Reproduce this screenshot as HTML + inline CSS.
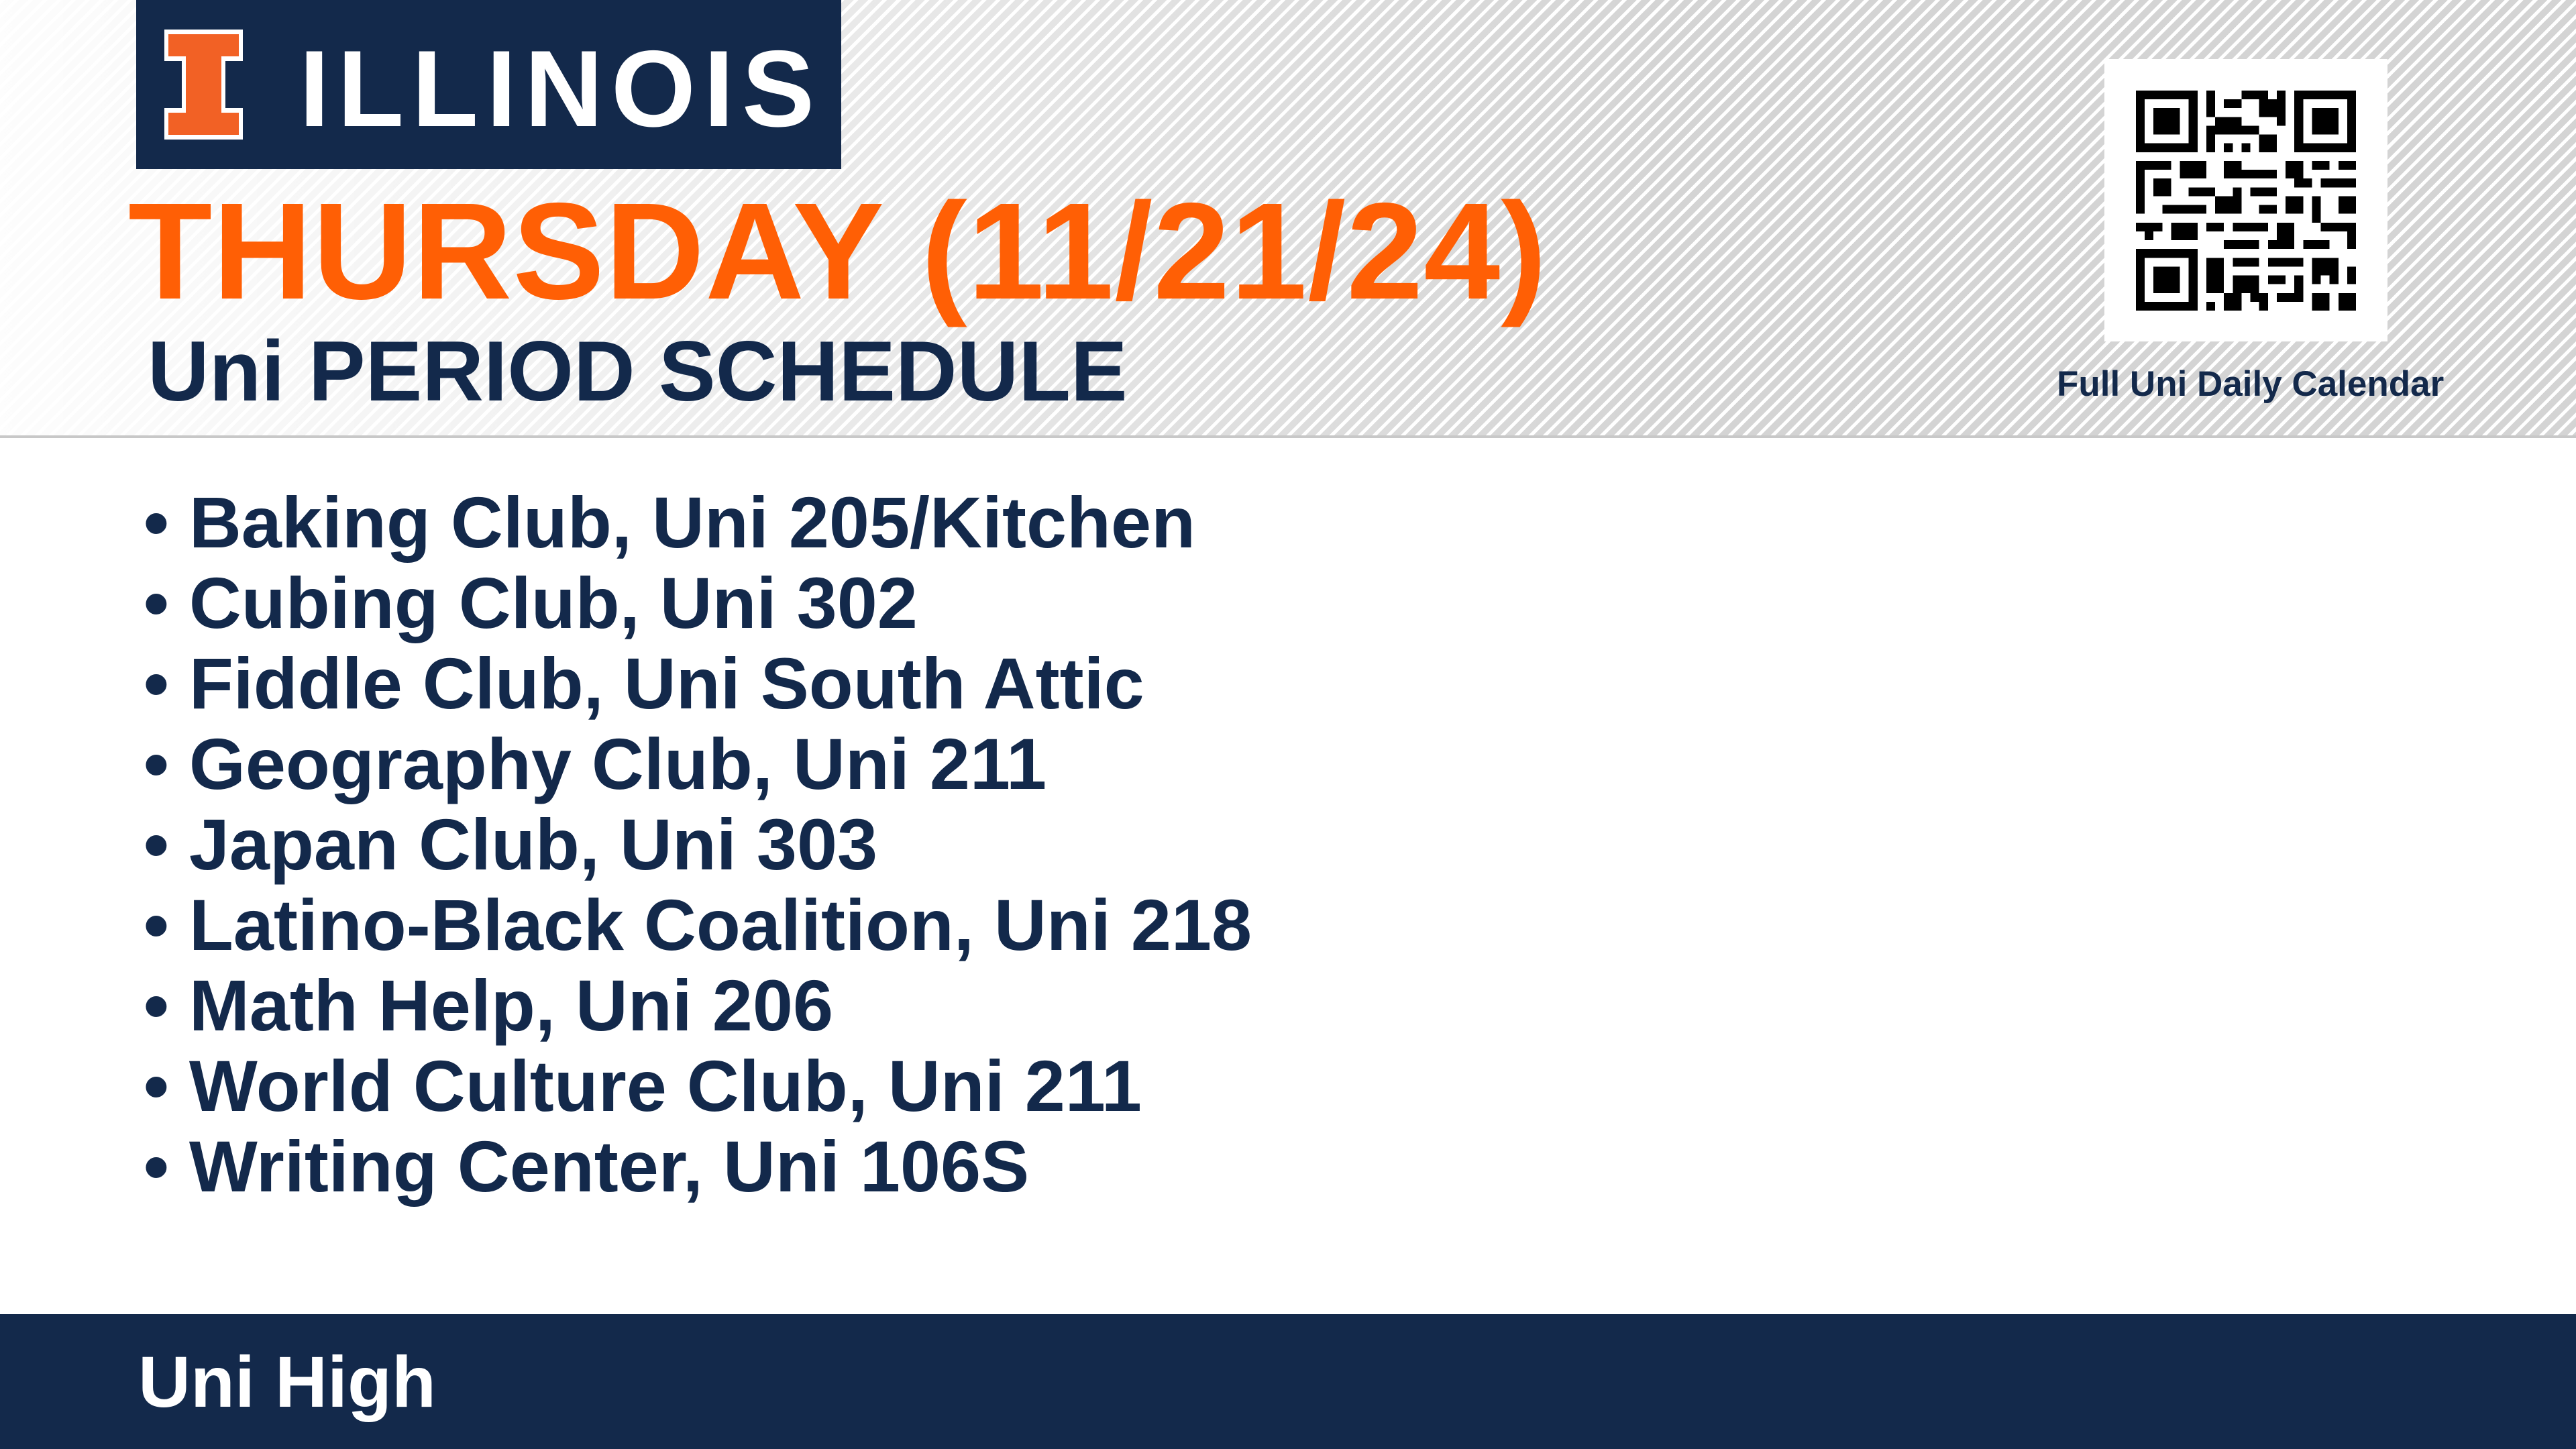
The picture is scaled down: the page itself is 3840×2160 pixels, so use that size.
<!DOCTYPE html>
<html><head><meta charset="utf-8"><style>
*{margin:0;padding:0;box-sizing:border-box}
body{width:3840px;height:2160px;position:relative;overflow:hidden;background:#fff;font-family:"Liberation Sans",sans-serif;font-weight:bold}
.hdr{position:absolute;left:0;top:0;width:3840px;height:651px;background:repeating-linear-gradient(135deg,#fff 0 5px,#d4d4d4 5px 15px)}
.fade{position:absolute;left:0;top:0;width:3840px;height:651px;background:linear-gradient(90deg,rgba(255,255,255,.95) 0%,rgba(255,255,255,.7) 20%,rgba(255,255,255,.3) 45%,rgba(255,255,255,0) 65%)}
.rule{position:absolute;left:0;top:649px;width:3840px;height:4px;background:#c8c8c8}
.t{position:absolute;white-space:nowrap;line-height:1}
.logo{position:absolute;left:203px;top:0;width:1051px;height:252px;background:#13294b}
.foot{position:absolute;left:0;top:1959px;width:3840px;height:201px;background:#13294b}
</style></head><body>
<div class="hdr"></div><div class="fade"></div><div class="rule"></div>
<div class="logo">
<svg style="position:absolute;left:42px;top:44px" width="117" height="164" viewBox="0 0 117 164">
<path d="M0 0H117V47H91V117H117V164H0V117H26V47H0Z" fill="#fff"/>
<path d="M6 7H111V40H85V124H111V157H6V124H32V40H6Z" fill="#f26125"/>
</svg>
<div class="t" style="left:243px;top:52px;font-size:162px;color:#fff;letter-spacing:12px">ILLINOIS</div>
</div>
<div class="t" style="left:191px;top:272px;font-size:205px;color:#ff5f05;letter-spacing:1px">THURSDAY (11/21/24)</div>
<div class="t" style="left:220px;top:490px;font-size:127px;color:#13294b">Uni PERIOD SCHEDULE</div>

<div style="position:absolute;left:3137px;top:88px;width:422px;height:421px;background:#fff"></div>
<svg style="position:absolute;left:3184px;top:135px" width="328" height="328" viewBox="0 0 25 25" shape-rendering="crispEdges">
<g fill="#000">
<path d="M0 0h7v7h-7zM1 1v5h5v-5zM2 2h3v3h-3z" fill-rule="evenodd"/>
<path d="M18 0h7v7h-7zM19 1v5h5v-5zM20 2h3v3h-3z" fill-rule="evenodd"/>
<path d="M0 18h7v7h-7zM1 19v5h5v-5zM2 20h3v3h-3z" fill-rule="evenodd"/>
<rect x="8" y="0" width="1" height="3"/><rect x="10" y="1" width="2" height="1"/><rect x="12" y="0" width="3" height="1"/><rect x="14" y="1" width="2" height="2"/><rect x="16" y="0" width="1" height="4"/>
<rect x="8" y="4" width="1" height="3"/><rect x="9" y="3" width="3" height="2"/><rect x="12" y="4" width="2" height="1"/><rect x="10" y="6" width="1" height="1"/><rect x="12" y="6" width="1" height="1"/><rect x="14" y="5" width="2" height="2"/>
<rect x="0" y="8" width="4" height="1"/><rect x="5" y="8" width="3" height="2"/><rect x="10" y="8" width="2" height="2"/><rect x="12" y="9" width="4" height="1"/><rect x="17" y="8" width="2" height="2"/><rect x="20" y="8" width="2" height="1"/><rect x="23" y="8" width="2" height="1"/>
<rect x="0" y="9" width="1" height="5"/><rect x="2" y="10" width="2" height="2"/><rect x="6" y="11" width="3" height="1"/><rect x="11" y="11" width="1" height="1"/><rect x="13" y="11" width="3" height="1"/><rect x="18" y="10" width="2" height="1"/><rect x="21" y="10" width="4" height="1"/>
<rect x="3" y="13" width="5" height="1"/><rect x="9" y="12" width="3" height="2"/><rect x="14" y="13" width="2" height="1"/><rect x="17" y="12" width="2" height="2"/><rect x="20" y="12" width="1" height="3"/><rect x="23" y="12" width="2" height="2"/>
<rect x="0" y="15" width="3" height="1"/><rect x="4" y="15" width="3" height="2"/><rect x="8" y="15" width="2" height="1"/><rect x="11" y="15" width="4" height="1"/><rect x="16" y="15" width="2" height="2"/><rect x="21" y="15" width="4" height="1"/>
<rect x="1" y="16" width="1" height="1"/><rect x="10" y="17" width="3" height="1"/><rect x="13" y="17" width="1" height="1"/><rect x="15" y="17" width="3" height="1"/><rect x="19" y="17" width="3" height="1"/><rect x="24" y="16" width="1" height="2"/>
<rect x="8" y="19" width="2" height="4"/><rect x="11" y="19" width="3" height="1"/><rect x="15" y="19" width="4" height="1"/><rect x="20" y="19" width="3" height="3"/><rect x="24" y="20" width="1" height="2"/>
<rect x="11" y="21" width="3" height="2"/><rect x="15" y="21" width="2" height="1"/><rect x="18" y="21" width="1" height="2"/><rect x="10" y="23" width="2" height="2"/><rect x="13" y="23" width="2" height="1"/><rect x="16" y="23" width="3" height="1"/><rect x="20" y="23" width="2" height="2"/><rect x="23" y="23" width="2" height="2"/>
<rect x="8" y="24" width="1" height="1"/><rect x="14" y="24" width="1" height="1"/>
<rect x="21" y="21" width="1" height="1" fill="#fff"/>
</g></svg>
<div class="t" style="left:3066px;top:546px;width:573px;text-align:center;font-size:53px;color:#13294b">Full Uni Daily Calendar</div>

<div style="position:absolute;left:214px;top:719px;font-size:108px;line-height:120px;color:#13294b;white-space:nowrap">
<div>• Baking Club, Uni 205/Kitchen</div>
<div>• Cubing Club, Uni 302</div>
<div>• Fiddle Club, Uni South Attic</div>
<div>• Geography Club, Uni 211</div>
<div>• Japan Club, Uni 303</div>
<div>• Latino-Black Coalition, Uni 218</div>
<div>• Math Help, Uni 206</div>
<div>• World Culture Club, Uni 211</div>
<div>• Writing Center, Uni 106S</div>
</div>

<div class="foot"></div>
<div class="t" style="left:206px;top:2006px;font-size:108px;color:#fff">Uni High</div>
</body></html>
